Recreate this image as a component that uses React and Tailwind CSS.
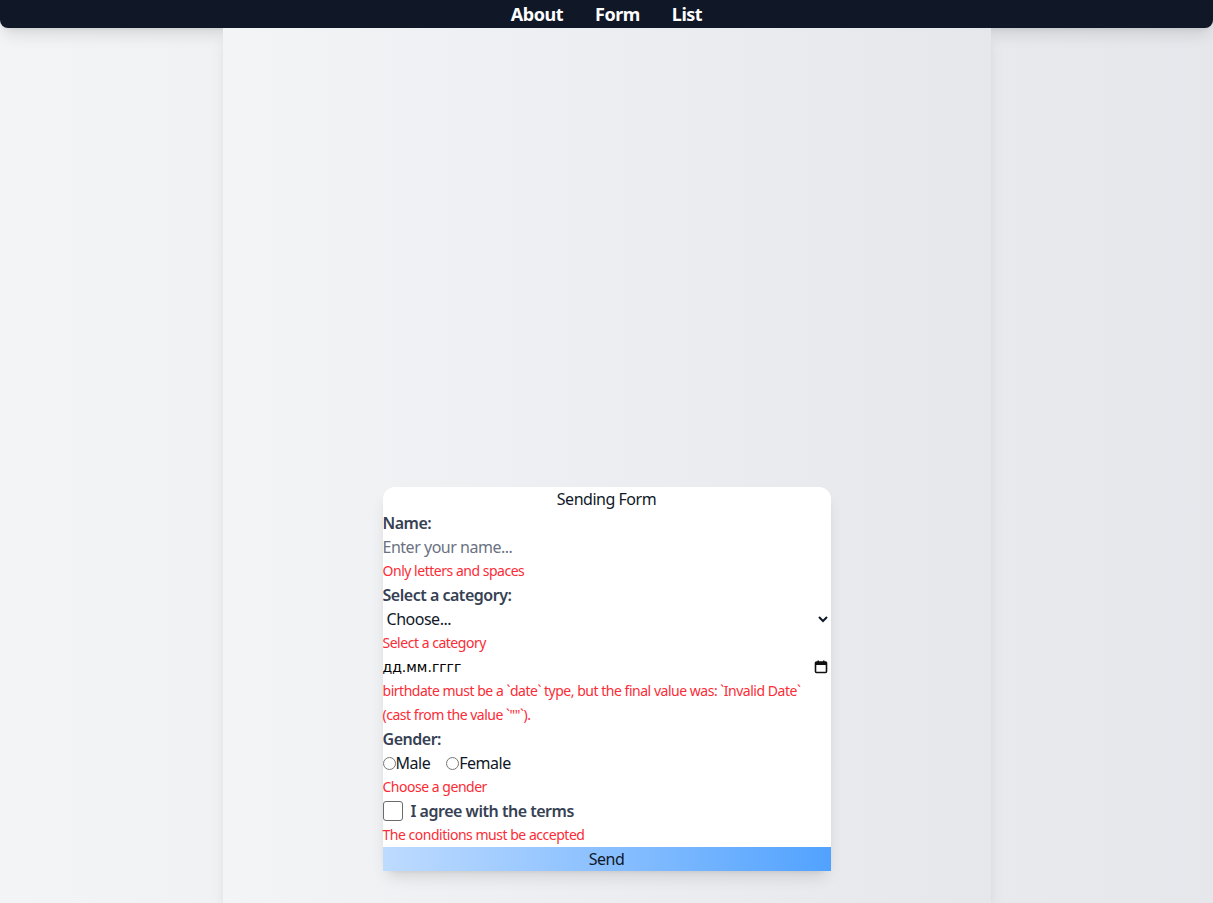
import React from "react";

function CalendarIcon() {
  return (
    <svg width="14" height="14" viewBox="0 0 14 14" aria-hidden="true">
      <rect x="1.5" y="2" width="11" height="10.5" rx="1" fill="none" stroke="#111" strokeWidth="1.6" />
      <rect x="1.5" y="2" width="11" height="3" fill="#111" />
      <rect x="3.5" y="0.5" width="1.5" height="2.5" fill="#111" />
      <rect x="9" y="0.5" width="1.5" height="2.5" fill="#111" />
    </svg>
  );
}

export default function App() {
  return (
    <div className="min-h-screen bg-gradient-to-r from-gray-100 to-gray-200 font-['Noto_Sans',sans-serif] tracking-[-0.03em]">
      <header className="h-7 bg-gray-900 rounded-b-lg shadow-lg flex justify-center items-center gap-8 text-white font-bold text-lg leading-7">
        <a href="#">About</a>
        <a href="#">Form</a>
        <a href="#">List</a>
      </header>
      <main className="mx-auto max-w-3xl h-[875px] bg-gradient-to-r from-gray-100 to-gray-200 shadow-lg flex flex-col items-center justify-end pb-8">
        <form className="w-[448px] bg-white rounded-xl shadow-lg flex flex-col text-base leading-6">
          <h2 className="text-center text-gray-900 h-6">Sending Form</h2>
          <label className="font-semibold text-gray-700 h-6">Name:</label>
          <input
            type="text"
            placeholder="Enter your name..."
            className="w-full h-6 outline-none placeholder:text-gray-500 text-gray-900 tracking-[-0.03em]"
          />
          <p className="text-sm text-red-500 h-6 leading-6">Only letters and spaces</p>
          <label className="font-semibold text-gray-700 h-6">Select a category:</label>
          <select className="w-full h-6 text-gray-900 outline-none tracking-[-0.03em]" defaultValue="">
            <option value="">Choose...</option>
            <option value="a">Category A</option>
          </select>
          <p className="text-sm text-red-500 h-6 leading-6">Select a category</p>
          <div className="h-6 flex items-center justify-between pr-[3px] font-['DejaVu_Sans',sans-serif] text-[14px] tracking-normal text-black">
            <span>дд.мм.гггг</span>
            <CalendarIcon />
          </div>
          <p className="text-sm text-red-500 leading-6">
            birthdate must be a `date` type, but the final value was: `Invalid Date` (cast from the value `""`).
          </p>
          <label className="font-semibold text-gray-700 h-6">Gender:</label>
          <div className="h-6 flex items-center text-gray-900">
            <label className="flex items-center">
              <input type="radio" name="gender" className="m-0 w-[13px] h-[13px]" />
              <span>Male</span>
            </label>
            <label className="flex items-center ml-4">
              <input type="radio" name="gender" className="m-0 w-[13px] h-[13px]" />
              <span>Female</span>
            </label>
          </div>
          <p className="text-sm text-red-500 h-6 leading-6">Choose a gender</p>
          <label className="h-6 flex items-center">
            <span className="w-5 h-5 border-[1.5px] border-[#6b6b6b] rounded-[3px] bg-white" />
            <span className="ml-2 font-semibold text-gray-700">I agree with the terms</span>
          </label>
          <p className="text-sm text-red-500 h-6 leading-6">The conditions must be accepted</p>
          <button
            type="button"
            className="w-full h-6 bg-gradient-to-r from-blue-200 to-blue-400 text-gray-900 tracking-[-0.03em]"
          >
            Send
          </button>
        </form>
      </main>
    </div>
  );
}
